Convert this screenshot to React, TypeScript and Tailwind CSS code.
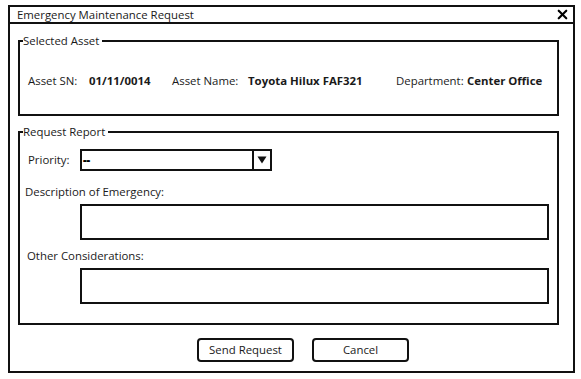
import { X } from 'lucide-react';

export default function App() {
  return (
    <div className="w-[581px] h-[379px] bg-white text-[11.4px] leading-[16px] text-[#1a1a1a] overflow-hidden" style={{ fontFamily: '"Open Sans", "Noto Sans", sans-serif' }}>
      <div className="ml-[8px] mt-[5px] w-[567px] h-[368px] border-2 border-[#111] flex flex-col">
        {/* Title bar */}
        <div className="h-[17px] border-b-2 border-[#111] flex items-center justify-between pl-[7px] pr-[3px]">
          <span>Emergency Maintenance Request</span>
          <X className="w-[15px] h-[15px] text-black" strokeWidth={3.5} />
        </div>

        <div className="ml-[8px] w-[541px] flex flex-col">
          {/* Selected Asset */}
          <fieldset className="mt-[9px] h-[83px] border-2 border-[#111]">
            <legend className="ml-[3px] pr-[3px]">Selected Asset</legend>
            <div className="mt-[24px] pl-[8px] flex items-center">
              <span className="w-[61px]">Asset SN:</span>
              <span className="w-[83px] font-bold">01/11/0014</span>
              <span className="w-[76px]">Asset Name:</span>
              <span className="w-[148px] font-bold">Toyota Hilux FAF321</span>
              <span className="w-[71px]">Department:</span>
              <span className="font-bold">Center Office</span>
            </div>
          </fieldset>

          {/* Request Report */}
          <fieldset className="mt-[8px] h-[201px] border-2 border-[#111]">
            <legend className="ml-[3px] pr-[3px]">Request Report</legend>
            <div className="mt-[9px] flex items-center">
              <span className="pl-[8px] w-[60px]">Priority:</span>
              <div className="w-[192px] h-[22px] border-2 border-[#111] flex">
                <span className="flex-1 pl-[1px] font-extrabold text-black leading-[18px]">--</span>
                <div className="w-[18px] border-l-2 border-[#111] flex items-center justify-center">
                  <svg width="10" height="8" viewBox="0 0 10 8">
                    <path d="M0.5 0.5 L9.5 0.5 L5 7.5 Z" fill="#111" />
                  </svg>
                </div>
              </div>
            </div>
            <div className="mt-[13px] pl-[5px]">Description of Emergency:</div>
            <div className="ml-[60px] mt-[4px] w-[469px] h-[36px] border-2 border-[#111]" />
            <div className="mt-[8px] pl-[7px]">Other Considerations:</div>
            <div className="ml-[60px] mt-[4px] w-[469px] h-[36px] border-2 border-[#111]" />
          </fieldset>
        </div>

        {/* Buttons */}
        <div className="mt-[13px] ml-[187px] flex gap-[18px]">
          <button className="w-[97px] h-[24px] border-2 border-[#111] rounded-[4px] bg-white">Send Request</button>
          <button className="w-[97px] h-[24px] border-2 border-[#111] rounded-[4px] bg-white">Cancel</button>
        </div>
      </div>
    </div>
  );
}
